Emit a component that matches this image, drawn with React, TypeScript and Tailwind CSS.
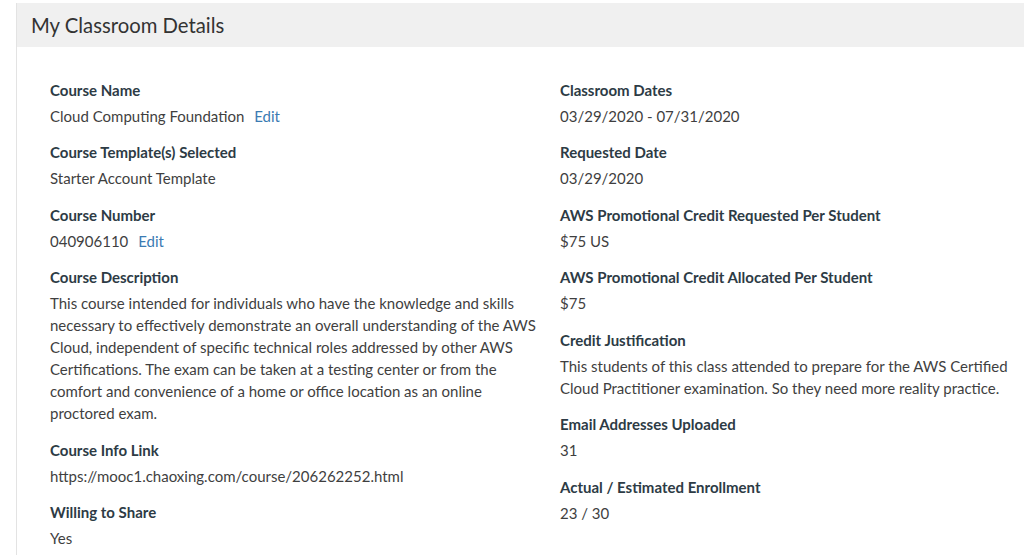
const leftFields: { label: string; value: React.ReactNode }[] = [
  {
    label: 'Course Name',
    value: (
      <>
        Cloud Computing Foundation <a className="ml-[6px] text-[#3b7bb3]">Edit</a>
      </>
    ),
  },
  { label: 'Course Template(s) Selected', value: 'Starter Account Template' },
  {
    label: 'Course Number',
    value: (
      <>
        040906110 <a className="ml-[6px] text-[#3b7bb3]">Edit</a>
      </>
    ),
  },
  {
    label: 'Course Description',
    value:
      'This course intended for individuals who have the knowledge and skills necessary to effectively demonstrate an overall understanding of the AWS Cloud, independent of specific technical roles addressed by other AWS Certifications. The exam can be taken at a testing center or from the comfort and convenience of a home or office location as an online proctored exam.',
  },
  { label: 'Course Info Link', value: 'https://mooc1.chaoxing.com/course/206262252.html' },
  { label: 'Willing to Share', value: 'Yes' },
];

const rightFields: { label: string; value: React.ReactNode }[] = [
  { label: 'Classroom Dates', value: '03/29/2020 - 07/31/2020' },
  { label: 'Requested Date', value: '03/29/2020' },
  { label: 'AWS Promotional Credit Requested Per Student', value: '$75 US' },
  { label: 'AWS Promotional Credit Allocated Per Student', value: '$75' },
  {
    label: 'Credit Justification',
    value:
      'This students of this class attended to prepare for the AWS Certified Cloud Practitioner examination. So they need more reality practice.',
  },
  { label: 'Email Addresses Uploaded', value: '31' },
  { label: 'Actual / Estimated Enrollment', value: '23 / 30' },
];

function Field({ label, value }: { label: string; value: React.ReactNode }) {
  return (
    <div className="mb-[14.5px]">
      <div className="font-bold text-[15px] leading-[22px] text-[#2d3b45]">{label}</div>
      <div className="mt-[4px] text-[15px] leading-[22px] text-[#3f3f3f]">{value}</div>
    </div>
  );
}

export default function App() {
  return (
    <div className="min-h-[555px] bg-white pt-[3px] pl-[16px] font-['Lato','Liberation_Sans',sans-serif]">
      <div className="border-l border-[#e3e3e3] min-h-[552px]">
        {/* Header */}
        <div className="h-[44px] bg-[#f0f0f0] flex items-center pl-[14px]">
          <h1 className="text-[20.3px] text-[#333]">My Classroom Details</h1>
        </div>

        {/* Details */}
        <div className="pt-[31.5px] pl-[33px] grid grid-cols-[490px_455px] gap-x-[20px]">
          <div>
            {leftFields.map((f) => (
              <Field key={f.label} label={f.label} value={f.value} />
            ))}
          </div>
          <div>
            {rightFields.map((f) => (
              <Field key={f.label} label={f.label} value={f.value} />
            ))}
          </div>
        </div>
      </div>
    </div>
  );
}
